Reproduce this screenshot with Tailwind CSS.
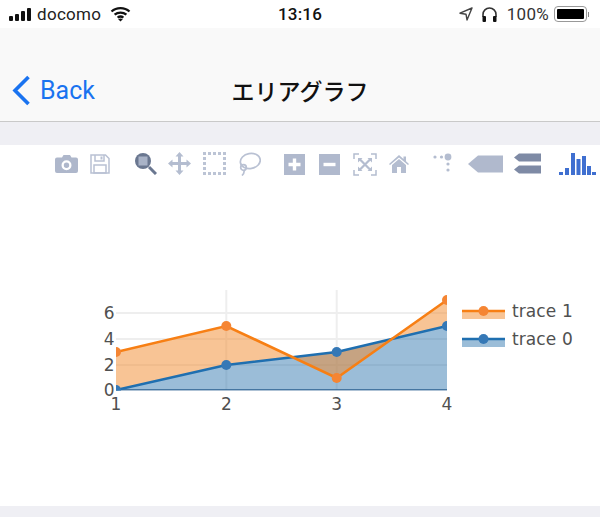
<!DOCTYPE html>
<html lang="ja">
<head>
<meta charset="utf-8">
<script src="https://cdn.jsdelivr.net/npm/@tailwindcss/browser@4"></script>
</head>
<body class="w-[600px] h-[517px] overflow-hidden bg-white font-['Inter','Liberation_Sans',sans-serif] text-black">
  <!-- status bar -->
  <div class="h-[28px] grid grid-cols-[1fr_auto_1fr] items-center bg-white text-[#1a1a1a]">
    <div class="flex items-center pl-[9px]">
      <svg class="w-[23px] h-[15px]" viewBox="0 0 23 15" fill="#111"><rect x="0" y="9" width="4" height="5" rx="1"/><rect x="6" y="7" width="4" height="7" rx="1"/><rect x="12" y="4" width="4" height="10" rx="1"/><rect x="18" y="1" width="4" height="13" rx="1"/></svg>
      <span class="ml-[5px] text-[17px] leading-none tracking-[0.3px] font-['Roboto',sans-serif] text-[#222]">docomo</span>
      <svg class="ml-[9px] w-[21px] h-[16px]" viewBox="0 0 21 16"><path d="M1.5 5.5C6.5 1 14.5 1 19.5 5.5M4.6 8.7C8 5.8 13 5.8 16.4 8.7M7.6 11.6C9.3 10.3 11.7 10.3 13.4 11.6" fill="none" stroke="#111" stroke-width="2.3"/><path d="M10.5 15.5L8.2 13.3C9.5 12.2 11.5 12.2 12.8 13.3Z" fill="#111"/></svg>
    </div>
    <div class="text-[17px] leading-none font-medium tracking-[0.2px] text-[#111] font-['Roboto',sans-serif]">13:16</div>
    <div class="flex items-center justify-end pr-[11px]">
      <svg class="w-[14px] h-[14px]" viewBox="0 0 14 14"><path d="M13 1L1 6.2L7 7.2L8 13Z" fill="none" stroke="#444" stroke-width="1.4" stroke-linejoin="round"/></svg>
      <svg class="ml-[8px] w-[17px] h-[17px]" viewBox="0 0 17 17"><path d="M2 11V8.5a6.500 6.500 0 0 1 13 0V11" fill="none" stroke="#333" stroke-width="1.600"/><rect x="1.500" y="10" width="3.500" height="6" rx="1" fill="#111"/><rect x="12" y="10" width="3.500" height="6" rx="1" fill="#111"/></svg>
      <span class="ml-[9px] text-[17px] leading-none tracking-[0.3px] font-['Roboto',sans-serif] text-[#333]">100%</span>
      <div class="ml-[5px] w-[33px] h-[16px] rounded-[4px] border border-[#999] p-[2px] bg-white"><div class="w-full h-full rounded-[1px] bg-black"></div></div>
      <div class="ml-[1px] w-[1px] h-[5px] bg-[#888]"></div>
    </div>
  </div>

  <!-- nav bar -->
  <div class="relative h-[94px] bg-[#f9f9f9] border-b border-[#c9c9c9]">
    <div class="absolute left-[12px] top-[47px] flex items-center">
      <svg class="w-[19px] h-[31px]" viewBox="0 0 19 31"><path d="M16.500 2L3 15.500L16.500 29" fill="none" stroke="#1a73f0" stroke-width="3.600"/></svg>
      <span class="ml-[9px] text-[25px] leading-[31px] text-[#1a73f0] font-['Roboto',sans-serif]">Back</span>
    </div>
    <div class="absolute inset-x-0 top-[46px] text-center text-[23px] leading-[32px] font-medium text-[#111] font-['Noto_Sans_CJK_JP',sans-serif]">エリアグラフ</div>
  </div>

  <!-- grey band -->
  <div class="h-[23px] bg-[#efeff4]"></div>

  <!-- chart card -->
  <div class="h-[361px] bg-white flex flex-col">
    <div class="h-[38px] pt-[7px] pl-[55px] flex items-start">
      <!-- camera -->
      <svg class="mt-[2px] w-[23px] h-[19px]" viewBox="0 0 23 19"><path fill-rule="evenodd" fill="#aeb7cb" d="M2 3.500H7L8.500 1H15L16.500 3.500H21a2 2 0 0 1 2 2V17a2 2 0 0 1-2 2H2a2 2 0 0 1-2-2V5.500a2 2 0 0 1 2-2ZM11.500 6.200a5 5 0 1 0 0 10a5 5 0 0 0 0-10ZM11.500 8.500a2.700 2.700 0 1 1 0 5.400a2.700 2.700 0 0 1 0-5.400Z"/></svg>
      <!-- save -->
      <svg class="ml-[12px] mt-[2px] w-[20px] h-[20px]" viewBox="0 0 20 20" fill="none" stroke="#b9c1d3" stroke-width="1.500"><path d="M1 1H15.500L19 4.500V19H1Z"/><path d="M5 1V7H14V1"/><rect x="4" y="11" width="12" height="8"/><rect x="10.500" y="2.500" width="2" height="3" fill="#b9c1d3" stroke="none"/></svg>
      <!-- zoom -->
      <svg class="ml-[23px] -mt-[1px] w-[24px] h-[24px]" viewBox="0 0 24 24" fill="none"><circle cx="10" cy="10" r="8" fill="#6a7790"/><rect x="5.500" y="5.500" width="9" height="9" fill="#a9b3c7"/><path d="M16 16L23 23" stroke="#6a7790" stroke-width="3"/></svg>
      <!-- pan -->
      <svg class="ml-[11px] w-[23px] h-[23px]" viewBox="0 0 23 23" fill="#b4bdd0"><path d="M11.500 0L15.500 4.500H13V10H18.500V7.500L23 11.500L18.500 15.500V13H13V18.500H15.500L11.500 23L7.500 18.500H10V13H4.500V15.500L0 11.500L4.500 7.500V10H10V4.500H7.500Z"/></svg>
      <!-- box select -->
      <svg class="ml-[12px] w-[23px] h-[23px]" viewBox="0 0 23 23" fill="#bcc4d5"><rect x="0" y="0" width="3" height="3"/><rect x="5" y="0" width="3" height="3"/><rect x="10" y="0" width="3" height="3"/><rect x="15" y="0" width="3" height="3"/><rect x="20" y="0" width="3" height="3"/><rect x="0" y="5" width="3" height="3"/><rect x="20" y="5" width="3" height="3"/><rect x="0" y="10" width="3" height="3"/><rect x="20" y="10" width="3" height="3"/><rect x="0" y="15" width="3" height="3"/><rect x="20" y="15" width="3" height="3"/><rect x="0" y="20" width="3" height="3"/><rect x="5" y="20" width="3" height="3"/><rect x="10" y="20" width="3" height="3"/><rect x="15" y="20" width="3" height="3"/><rect x="20" y="20" width="3" height="3"/></svg>
      <!-- lasso -->
      <svg class="ml-[12px] w-[23px] h-[24px]" viewBox="0 0 23 24" fill="none" stroke="#b9c1d3" stroke-width="1.700"><ellipse cx="12.300" cy="9" rx="10" ry="7.500" transform="rotate(-10 12.300 9)"/><circle cx="5.500" cy="15.500" r="2.800"/><path d="M6 18C6.500 20 5.500 22 4 23.500"/></svg>
      <!-- plus -->
      <svg class="ml-[23px] mt-[2px] w-[21px] h-[21px]" viewBox="0 0 21 21"><rect width="21" height="21" fill="#b0b9cd"/><path d="M10.500 4.500V16.500M4.500 10.500H16.500" stroke="#fff" stroke-width="3.400"/></svg>
      <!-- minus -->
      <svg class="ml-[14px] mt-[2px] w-[21px] h-[21px]" viewBox="0 0 21 21"><rect width="21" height="21" fill="#b0b9cd"/><path d="M4.500 10.500H16.500" stroke="#fff" stroke-width="3.400"/></svg>
      <!-- autoscale -->
      <svg class="ml-[13px] mt-[1px] w-[24px] h-[23px]" viewBox="0 0 24 23" fill="none" stroke="#b4bdd0" stroke-width="1.500"><path d="M6 1H1V6M18 1H23V6M1 17V22H6M23 17V22H18"/><path d="M6.500 6L17.500 17M17.500 6L6.500 17" stroke-width="2.200"/><path d="M5 5H9.500L5 9.500ZM19 5H14.500L19 9.500ZM5 18H9.500L5 13.500ZM19 18H14.500L19 13.500Z" fill="#b4bdd0" stroke="none"/></svg>
      <!-- home -->
      <svg class="ml-[12px] mt-[3px] w-[20px] h-[18px]" viewBox="0 0 20 18" fill="#b4bdd0"><path d="M10 0L14.500 4V1.500H17V6.200L20 9L19 10L10 2.500L1 10L0 9Z"/><path d="M10 4L17 10V18H12V12H8V18H3V10Z"/></svg>
      <!-- spikes -->
      <svg class="ml-[24px] mt-[1px] w-[22px] h-[22px]" viewBox="0 0 22 22" fill="#b4bdd0"><circle cx="2" cy="4" r="1.600"/><circle cx="8.500" cy="4" r="1.600"/><circle cx="15" cy="4" r="3.400"/><circle cx="15" cy="11" r="1.600"/><circle cx="15" cy="17" r="1.600"/></svg>
      <!-- closest -->
      <svg class="ml-[13px] mt-[3px] w-[35px] h-[18px]" viewBox="0 0 35 18" fill="#b0b9cd"><path d="M0 9L10 0.500H35V17.500H10Z"/></svg>
      <!-- compare -->
      <svg class="ml-[11px] mt-[1px] w-[27px] h-[21px]" viewBox="0 0 27 21" fill="#7e8aa5"><path d="M0 4.500L5 0.500H27V8.500H5Z"/><path d="M0 16.500L5 12.500H27V20.500H5Z"/></svg>
      <!-- logo -->
      <svg class="ml-[18px] w-[37px] h-[24px]" viewBox="0 0 37 24" fill="#3f6fd0"><rect x="0" y="20" width="4" height="3"/><rect x="6" y="16" width="4" height="7"/><rect x="12" y="1" width="4" height="22"/><rect x="17.500" y="7" width="4" height="16"/><rect x="23" y="4" width="4" height="19"/><rect x="28" y="14" width="4" height="9"/><rect x="33" y="20" width="4" height="3"/></svg>
    </div>

    <!-- plot: page y = svg y + 183 -->
    <svg class="w-[600px] h-[323px] block" viewBox="0 183 600 323" font-family="'DejaVu Sans',sans-serif" font-size="17" fill="#505050">
      <defs><clipPath id="plot"><rect x="116" y="290" width="331" height="100.500"/></clipPath></defs>
      <g stroke="#eeeeee" stroke-width="2" fill="none">
        <path d="M226.300 290V390M336.700 290V390"/>
        <path d="M116 313H447M116 339H447M116 365H447"/>
      </g>
      <g clip-path="url(#plot)">
        <path d="M116 390L226.300 365L336.700 352L447 326V390Z" fill="#2f75ae" fill-opacity=".48"/>
        <path d="M116 352L226.300 326L336.700 378L447 300L447 326L336.700 352L226.300 365L116 390Z" fill="#f18a2b" fill-opacity=".5"/>
        <path d="M116 390H447" stroke="#2a5f8f" stroke-width="1.500"/>
        <path d="M116 390L226.300 365L336.700 352L447 326" fill="none" stroke="#1f6fb0" stroke-width="2.600"/>
        <path d="M116 352L226.300 326L336.700 378L447 300" fill="none" stroke="#f77f14" stroke-width="2.600"/>
        <g fill="#3578b6"><circle cx="116" cy="390" r="5"/><circle cx="226.300" cy="365" r="5"/><circle cx="336.700" cy="352" r="5"/><circle cx="447" cy="326" r="5"/></g>
        <g fill="#f58533"><circle cx="116" cy="352" r="5"/><circle cx="226.300" cy="326" r="5"/><circle cx="336.700" cy="378" r="5"/><circle cx="447" cy="300" r="5"/></g>
      </g>
      <g text-anchor="end">
        <text x="114.500" y="319">6</text>
        <text x="114.500" y="345">4</text>
        <text x="114.500" y="371">2</text>
        <text x="114.500" y="396">0</text>
      </g>
      <g text-anchor="middle">
        <text x="116" y="410">1</text>
        <text x="226.300" y="410">2</text>
        <text x="336.700" y="410">3</text>
        <text x="447" y="410">4</text>
      </g>
      <rect x="462" y="311" width="43" height="8" fill="#f18a2b" fill-opacity=".5"/>
      <path d="M462 311H505" stroke="#f77f14" stroke-width="2.600"/>
      <circle cx="483.500" cy="311" r="5" fill="#f58533"/>
      <text x="512" y="317" letter-spacing=".1">trace 1</text>
      <rect x="462" y="339" width="43" height="8" fill="#2f75ae" fill-opacity=".48"/>
      <path d="M462 339H505" stroke="#1f6fb0" stroke-width="2.600"/>
      <circle cx="483.500" cy="339" r="5" fill="#3578b6"/>
      <text x="512" y="345" letter-spacing=".1">trace 0</text>
    </svg>
  </div>

  <div class="h-[11px] bg-[#efeff4]"></div>
</body>
</html>
